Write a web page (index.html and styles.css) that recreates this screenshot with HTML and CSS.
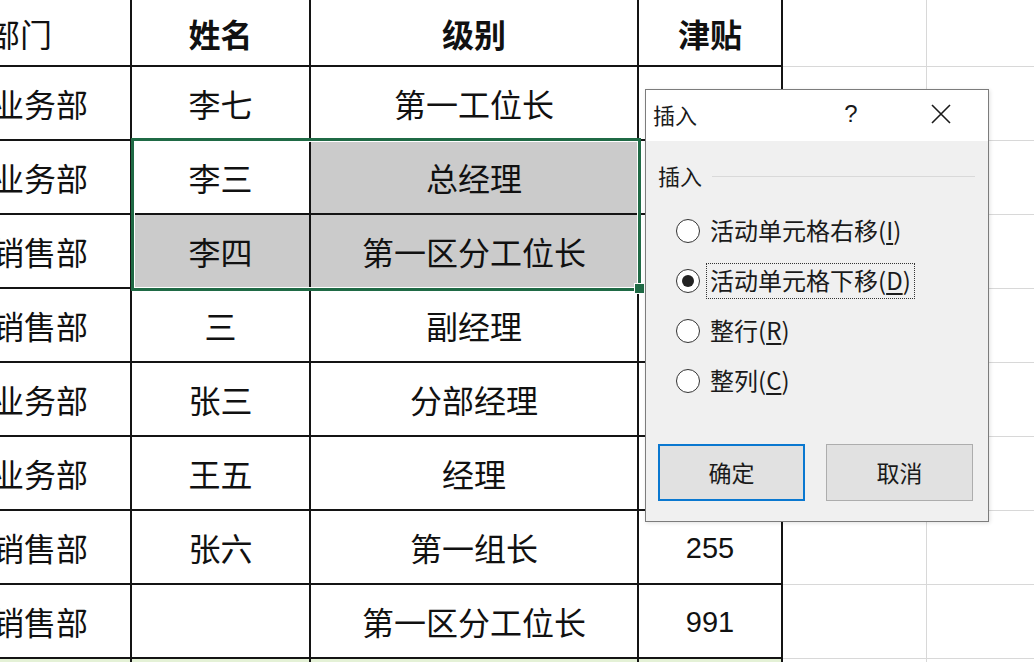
FILE: index.html
```html
<!DOCTYPE html>
<html lang="zh-CN">
<head>
  <meta charset="UTF-8">
  <title>插入单元格</title>
  <link rel="stylesheet" href="styles.css">
</head>
<body>
  <div class="sheet">
    <div class="grid">
      <!-- header -->
      <div class="cell head dept">部门</div>
      <div class="cell head">姓名</div>
      <div class="cell head">级别</div>
      <div class="cell head">津贴</div>
      <div class="cell blank"></div>
      <div class="cell blank"></div>

      <div class="cell">业务部</div>
      <div class="cell">李七</div>
      <div class="cell">第一工位长</div>
      <div class="cell"></div>
      <div class="cell blank"></div>
      <div class="cell blank"></div>

      <div class="cell">业务部</div>
      <div class="cell">李三</div>
      <div class="cell picked">总经理</div>
      <div class="cell"></div>
      <div class="cell blank"></div>
      <div class="cell blank"></div>

      <div class="cell">销售部</div>
      <div class="cell picked">李四</div>
      <div class="cell picked">第一区分工位长</div>
      <div class="cell"></div>
      <div class="cell blank"></div>
      <div class="cell blank"></div>

      <div class="cell">销售部</div>
      <div class="cell">三</div>
      <div class="cell">副经理</div>
      <div class="cell"></div>
      <div class="cell blank"></div>
      <div class="cell blank"></div>

      <div class="cell">业务部</div>
      <div class="cell">张三</div>
      <div class="cell">分部经理</div>
      <div class="cell"></div>
      <div class="cell blank"></div>
      <div class="cell blank"></div>

      <div class="cell">业务部</div>
      <div class="cell">王五</div>
      <div class="cell">经理</div>
      <div class="cell"></div>
      <div class="cell blank"></div>
      <div class="cell blank"></div>

      <div class="cell">销售部</div>
      <div class="cell">张六</div>
      <div class="cell">第一组长</div>
      <div class="cell num">255</div>
      <div class="cell blank"></div>
      <div class="cell blank"></div>

      <div class="cell">销售部</div>
      <div class="cell"></div>
      <div class="cell">第一区分工位长</div>
      <div class="cell num">991</div>
      <div class="cell blank"></div>
      <div class="cell blank"></div>

      <div class="cell tint"></div>
      <div class="cell tint"></div>
      <div class="cell tint"></div>
      <div class="cell tint"></div>
      <div class="cell blank last"></div>
      <div class="cell blank last"></div>
    </div>

    <!-- selection range B3:C4 -->
    <div class="selection"></div>
    <div class="fill-handle"></div>
  </div>

  <div class="dialog">
    <div class="dlg-title">
      <span class="dlg-name">插入</span>
      <span class="dlg-help">?</span>
      <span class="dlg-close">
        <svg width="22" height="22" viewBox="0 0 22 22">
          <path d="M2 2 L20 20 M20 2 L2 20" stroke="#1a1a1a" stroke-width="1.6" fill="none"/>
        </svg>
      </span>
    </div>
    <div class="dlg-body">
      <div class="group">
        <span>插入</span>
        <i class="rule"></i>
      </div>
      <div class="options">
        <div class="opt"><span class="radio"></span><span class="opt-text">活动单元格右移(<u>I</u>)</span></div>
        <div class="opt"><span class="radio checked"></span><span class="opt-text focus">活动单元格下移(<u>D</u>)</span></div>
        <div class="opt"><span class="radio"></span><span class="opt-text">整行(<u>R</u>)</span></div>
        <div class="opt"><span class="radio"></span><span class="opt-text">整列(<u>C</u>)</span></div>
      </div>
      <div class="buttons">
        <button class="btn primary">确定</button>
        <button class="btn">取消</button>
      </div>
    </div>
  </div>
</body>
</html>
```

FILE: styles.css
```css
body {
  margin: 0;
  background: #fff;
  overflow: hidden;
  font-family: "Noto Sans CJK SC", "Liberation Sans", sans-serif;
  color: #111;
}
.sheet {
  position: relative;
  margin-left: -50px;
  width: 1121px;
}
.grid {
  display: grid;
  grid-template-columns: 182px 179px 328px 144px 144px 144px;
  grid-template-rows: 67px repeat(8, 74px) 3px;
}
.cell {
  box-sizing: border-box;
  border-right: 2px solid #141414;
  border-bottom: 2px solid #141414;
  display: flex;
  align-items: center;
  justify-content: center;
  font-size: 32px;
  line-height: 1;
  white-space: nowrap;
}
.cell.head { font-weight: bold; }
.cell.dept {
  font-weight: normal;
  justify-content: flex-end;
  padding-right: 78px;
}
.cell.num {
  font-family: "Liberation Sans", sans-serif;
  font-size: 29px;
  padding-top: 3px;
}
.cell.picked { background: #cbcbcb; }
.cell.tint { background: #e4f1d6; border-bottom: none; }
.cell.blank {
  border-right: 1px solid #d8d8d8;
  border-bottom: 1px solid #d8d8d8;
}
.cell.last { border-bottom: none; }
.selection {
  position: absolute;
  left: 181px;
  top: 138px;
  width: 510px;
  height: 153px;
  box-sizing: border-box;
  border: 3px solid #1f6a45;
  box-shadow: inset 0 0 0 1px #fff;
}
.fill-handle {
  position: absolute;
  left: 684px;
  top: 283px;
  width: 9px;
  height: 9px;
  background: #1f6a45;
  border: 1px solid #fff;
}

/* insert dialog */
.dialog {
  position: absolute;
  left: 645px;
  top: 89px;
  width: 344px;
  height: 433px;
  box-sizing: border-box;
  border: 1px solid #7c7c7c;
  background: #f0f0f0;
  display: flex;
  flex-direction: column;
  box-shadow: 1px 1px 4px rgba(0, 0, 0, 0.12);
}
.dlg-title {
  height: 51px;
  background: #fff;
  display: flex;
  align-items: center;
  padding-left: 7px;
  font-size: 22px;
  color: #1a1a1a;
}
.dlg-name { padding-bottom: 3px; }
.dlg-help {
  margin-left: auto;
  width: 46px;
  text-align: center;
  font-family: "Liberation Sans", sans-serif;
  font-size: 24px;
  padding-bottom: 4px;
}
.dlg-close {
  width: 46px;
  margin-left: 44px;
  margin-right: 24px;
  display: flex;
  justify-content: center;
  padding-bottom: 4px;
}
.dlg-body {
  flex: 1;
  padding: 22px 13px 0 12px;
  display: flex;
  flex-direction: column;
}
.group {
  display: flex;
  align-items: center;
  height: 24px;
  font-size: 22px;
  color: #1a1a1a;
  gap: 10px;
}
.rule {
  flex: 1;
  height: 1px;
  background: #d9d9d9;
  margin-top: 2px;
}
.options {
  margin-top: 19px;
  display: flex;
  flex-direction: column;
}
.opt {
  height: 50px;
  display: flex;
  align-items: center;
  font-size: 24px;
  color: #1a1a1a;
}
.radio {
  width: 24px;
  height: 24px;
  box-sizing: border-box;
  margin-left: 18px;
  border: 1.6px solid #333;
  border-radius: 50%;
  background: #fff;
  display: flex;
  align-items: center;
  justify-content: center;
}
.radio.checked::after {
  content: "";
  width: 12px;
  height: 12px;
  border-radius: 50%;
  background: #222;
}
.opt-text {
  margin-left: 6px;
  padding: 2px 3px 4px;
  border: 1px dotted transparent;
  line-height: 1.2;
}
.opt-text.focus { border-color: #333; }
.opt-text u { text-underline-offset: 3px; }
.buttons {
  margin-top: 38px;
  display: flex;
  gap: 21px;
}
.btn {
  width: 147px;
  height: 57px;
  box-sizing: border-box;
  background: #e1e1e1;
  border: 1px solid #adadad;
  font-family: "Noto Sans CJK SC", sans-serif;
  font-size: 23px;
  color: #1a1a1a;
  padding: 0 0 2px;
}
.btn.primary { border: 2px solid #0a78d0; }
```
